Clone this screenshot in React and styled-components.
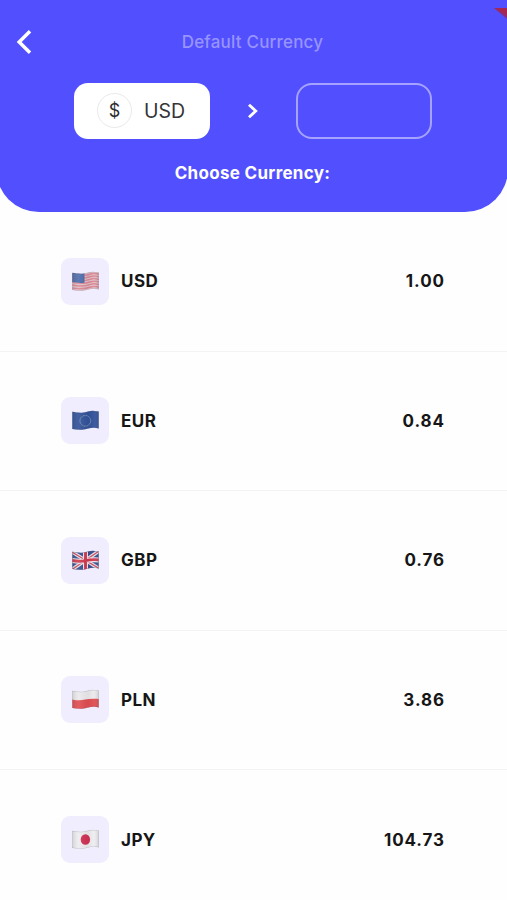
import React from 'react';
import styled, { createGlobalStyle } from 'styled-components';

const GlobalStyle = createGlobalStyle`
    * {
        box-sizing: border-box;
    }

    body {
        margin: 0;
        background-color: #fefefe;
        font-family: Inter, "Liberation Sans", sans-serif;
        overflow: hidden;
    }
`;

const Screen = styled.div`
    position: relative;
    width: 507px;
    height: 900px;
    overflow: hidden;
`;

const Header = styled.header`
    height: 212px;
    margin: 0 -1px 0 -4px;
    padding: 0 4px;
    background-color: #524fff;
    border-radius: 0 0 43px 43px;
`;

const TopBar = styled.div`
    display: grid;
    grid-template-columns: 50px 1fr 50px;
    align-items: center;
    width: 505px;
    height: 83px;
`;

const BackButton = styled.button`
    display: flex;
    padding: 0 0 0 16px;
    border: none;
    background: none;
`;

const Title = styled.h1`
    margin: 0;
    font-size: 17px;
    font-weight: 500;
    line-height: 22px;
    letter-spacing: 0.2px;
    text-align: center;
    color: #9794ff;
`;

const Exchange = styled.div`
    display: flex;
    align-items: center;
    justify-content: center;
    width: 506px;
    height: 55px;
`;

const CurrencyBox = styled.div`
    display: flex;
    align-items: center;
    width: 136px;
    height: 56px;
    padding-left: ${props => props.$filled ? '23px' : '0'};
    border: ${props => props.$filled ? 'none' : '2px solid #a5a3ff'};
    border-radius: ${props => props.$filled ? '14px' : '16px'};
    background-color: ${props => props.$filled ? '#fff' : 'transparent'};
`;

const Symbol = styled.span`
    display: flex;
    align-items: center;
    justify-content: center;
    width: 35px;
    height: 35px;
    margin-right: 12px;
    border: 1.5px solid #e9e9eb;
    border-radius: 50%;
    font-size: 18px;
    color: #2e2e30;
`;

const BoxCode = styled.span`
    font-size: 19.5px;
    color: #343436;
`;

const Arrow = styled.div`
    display: flex;
    justify-content: center;
    width: 86px;
`;

const Choose = styled.h2`
    width: 505px;
    margin: 24px 0 0;
    font-size: 17px;
    font-weight: 700;
    line-height: 22px;
    letter-spacing: 0.3px;
    text-align: center;
    color: #fff;
`;

const List = styled.ul`
    margin: 0;
    padding: 0;
    list-style: none;
`;

const Row = styled.li`
    display: flex;
    align-items: center;
    height: 139.5px;
    padding: 0 63px 0 61px;
    border-bottom: 1px solid #f3f3f4;

    &:last-child {
        border-bottom: none;
    }
`;

const FlagTile = styled.div`
    display: flex;
    align-items: center;
    justify-content: center;
    width: 48px;
    height: 47px;
    margin-right: 12px;
    padding-left: 1px;
    border-radius: 9px;
    background-color: #efedfe;
`;

const Code = styled.span`
    font-size: 17px;
    font-weight: 650;
    letter-spacing: 0.45px;
    color: #161617;
`;

const Rate = styled.span`
    margin-left: auto;
    font-size: 17px;
    font-weight: 650;
    letter-spacing: 0.9px;
    margin-right: -0.9px;
    color: #161617;
`;

const Ribbon = styled.svg`
    position: absolute;
    top: 8px;
    right: 0;
`;

const wave = 'M.3 1.8C3.5 2.3 6.5 2.9 10 2.7C15 2.4 18 .6 22 .9C24 1 25.5 1.2 26.7 1.4V18.4C25 18 23.5 17.8 22 17.8C18 17.7 15 19.4 10 19.8C6.5 20 3.5 19.6.3 19Z';

const flags = {
    USD: (
        <>
            <rect width="27" height="21" fill="#e3bfc7" />
            <path d="M0 3.5C9 5.2 13 5 18 3.2S24 2.9 27 3.2M0 6.1C9 7.8 13 7.6 18 5.8S24 5.5 27 5.8M0 8.7C9 10.4 13 10.2 18 8.4S24 8.1 27 8.4M0 11.3C9 13 13 12.8 18 11S24 10.7 27 11M0 13.9C9 15.6 13 15.4 18 13.6S24 13.3 27 13.6M0 17C9 18.5 13 17.9 18 16.2S24 15.9 27 16.3" fill="none" stroke="#d98593" strokeWidth="1.5" />
            <path d="M0 1.5C5 1.5 8 2 12.5 2.2V11.7C8 12.2 5 11.8 0 11.1Z" fill="#4968a8" />
            <path d="M2 4.5H11M2 6.7H11M2 8.9H11" stroke="#7089ba" strokeWidth=".5" strokeDasharray=".7 1.2" />
        </>
    ),
    EUR: (
        <>
            <rect width="27" height="21" fill="#2e4e98" />
            <circle cx="13.3" cy="10.8" r="5.4" fill="none" stroke="#5b77a6" strokeWidth="1" />
            <circle cx="13.3" cy="10.8" r="5.4" fill="none" stroke="#7688a4" strokeWidth=".8" strokeDasharray="1 1.83" />
        </>
    ),
    GBP: (
        <>
            <rect width="27" height="21" fill="#344b8d" />
            <path d="M0 2L27 18.5M0 19.5L27 1" stroke="#e4e1ea" strokeWidth="3.6" />
            <path d="M0 2L27 18.5M0 19.5L27 1" stroke="#ca4659" strokeWidth="1.2" />
            <path d="M13.5 0V21M0 10.4C5 11.4 9 11.6 13.5 10.6S22 9.4 27 9.9" fill="none" stroke="#eee7ed" strokeWidth="5" />
            <path d="M13.5 0V21M0 10.4C5 11.4 9 11.6 13.5 10.6S22 9.4 27 9.9" fill="none" stroke="#ce354b" strokeWidth="2.9" />
        </>
    ),
    PLN: (
        <>
            <rect width="27" height="21" fill="#ebe9eb" />
            <path d="M0 10.4C5 11.4 9 11.6 13 10.6S22 9.4 27 9.9V21H0Z" fill="#df4a4e" />
        </>
    ),
    JPY: (
        <>
            <rect width="27" height="21" fill="#ededf0" />
            <ellipse cx="13.4" cy="10.5" rx="4.7" ry="5.3" fill="#d02d50" />
        </>
    ),
};

const currencies = [
    { code: 'USD', rate: '1.00' },
    { code: 'EUR', rate: '0.84' },
    { code: 'GBP', rate: '0.76' },
    { code: 'PLN', rate: '3.86' },
    { code: 'JPY', rate: '104.73' },
];

function Flag({ code }) {
    return (
        <svg width="27" height="21" viewBox="0 0 27 21">
            <defs>
                <clipPath id={`wave-${code}`}>
                    <path d={wave} />
                </clipPath>
                <linearGradient id={`shade-${code}`}>
                    <stop offset="0" stopColor="#555" stopOpacity=".18" />
                    <stop offset=".25" stopColor="#fff" stopOpacity=".1" />
                    <stop offset=".6" stopColor="#555" stopOpacity=".07" />
                    <stop offset=".8" stopColor="#fff" stopOpacity=".06" />
                    <stop offset="1" stopColor="#555" stopOpacity=".2" />
                </linearGradient>
            </defs>
            <g clipPath={`url(#wave-${code})`}>
                {flags[code]}
                <rect width="27" height="21" fill={`url(#shade-${code})`} />
                <path d={wave} fill="none" stroke="#62626c" strokeOpacity=".28" strokeWidth="1" />
            </g>
        </svg>
    );
}

function App() {
    return (
        <Screen>
            <GlobalStyle />
            <Header>
                <TopBar>
                    <BackButton aria-label="Back">
                        <svg width="17" height="26" viewBox="0 0 17 26">
                            <path d="M14 2.2L3.2 13L14 23.8" fill="none" stroke="#fff" strokeWidth="3.5" />
                        </svg>
                    </BackButton>
                    <Title>Default Currency</Title>
                </TopBar>
                <Exchange>
                    <CurrencyBox $filled>
                        <Symbol>$</Symbol>
                        <BoxCode>USD</BoxCode>
                    </CurrencyBox>
                    <Arrow>
                        <svg width="12" height="16" viewBox="0 0 12 16">
                            <path d="M2 1.7L8.7 8L2 14.3" fill="none" stroke="#fff" strokeWidth="2.9" />
                        </svg>
                    </Arrow>
                    <CurrencyBox />
                </Exchange>
                <Choose>Choose Currency:</Choose>
            </Header>
            <List>
                {currencies.map(item => (
                    <Row key={item.code}>
                        <FlagTile>
                            <Flag code={item.code} />
                        </FlagTile>
                        <Code>{item.code}</Code>
                        <Rate>{item.rate}</Rate>
                    </Row>
                ))}
            </List>
            <Ribbon width="15" height="12" viewBox="0 0 15 12">
                <defs>
                    <linearGradient id="ribbon" x1="0" y1="1" x2=".6" y2="0">
                        <stop offset=".25" stopColor="#5140bb" />
                        <stop offset=".8" stopColor="#a72652" />
                    </linearGradient>
                </defs>
                <path d="M2 0H15V11Z" fill="url(#ribbon)" />
            </Ribbon>
        </Screen>
    );
}

export default App;
